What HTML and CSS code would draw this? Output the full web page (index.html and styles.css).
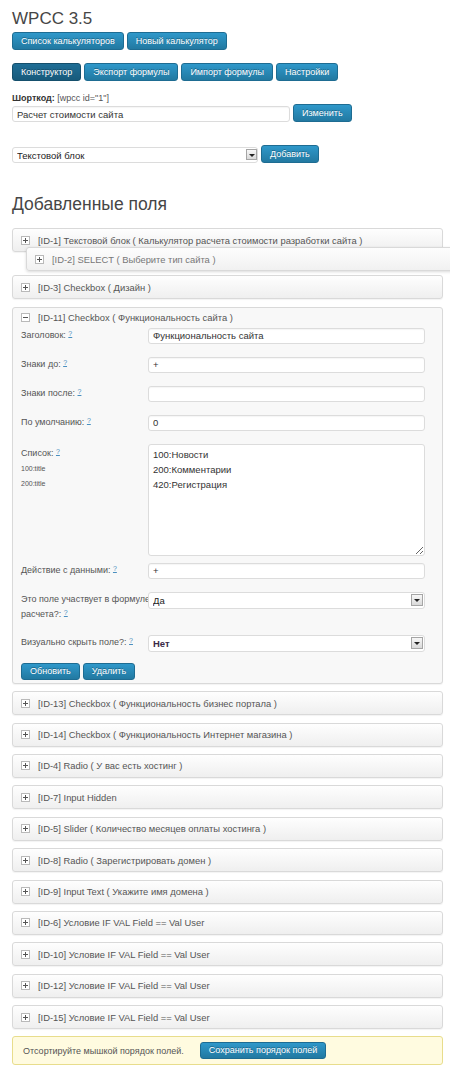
FILE: index.html
```html
<!DOCTYPE html>
<html lang="ru">
<head>
<meta charset="utf-8">
<title>WPCC 3.5</title>
<link rel="stylesheet" href="styles.css">
</head>
<body>
<div class="page">
  <h1 class="title">WPCC 3.5</h1>

  <div class="btn-row row-main">
    <a class="btn">Список калькуляторов</a>
    <a class="btn">Новый калькулятор</a>
  </div>

  <div class="btn-row row-tabs">
    <a class="btn active">Конструктор</a>
    <a class="btn">Экспорт формулы</a>
    <a class="btn">Импорт формулы</a>
    <a class="btn">Настройки</a>
  </div>

  <div class="shortcode"><b>Шорткод:</b> [wpcc id="1"]</div>

  <div class="name-row">
    <input class="text-input name-input" type="text" value="Расчет стоимости сайта">
    <button class="btn" type="button">Изменить</button>
  </div>

  <div class="add-row">
    <div class="select-wrap add-select">
      <select class="select"><option>Текстовой блок</option></select>
      <span class="select-arrow"></span>
    </div>
    <button class="btn" type="button">Добавить</button>
  </div>

  <h2 class="section-title">Добавленные поля</h2>

  <div class="fields">
    <div class="field">
      <div class="field-head"><svg class="toggle" width="9" height="9" viewBox="0 0 9 9"><rect x="0.5" y="0.5" width="8" height="8" fill="#fff" stroke="#b9b9b9"/><path d="M2 4.5h5M4.5 2v5" stroke="#555"/></svg><span>[ID-1] Текстовой блок ( Калькулятор расчета стоимости разработки сайта )</span></div>
    </div>
    <div class="sort-placeholder"></div>
    <div class="field dragging">
      <div class="field-head"><svg class="toggle" width="9" height="9" viewBox="0 0 9 9"><rect x="0.5" y="0.5" width="8" height="8" fill="#fff" stroke="#b9b9b9"/><path d="M2 4.5h5M4.5 2v5" stroke="#555"/></svg><span>[ID-2] SELECT ( Выберите тип сайта )</span></div>
    </div>
    <div class="field">
      <div class="field-head"><svg class="toggle" width="9" height="9" viewBox="0 0 9 9"><rect x="0.5" y="0.5" width="8" height="8" fill="#fff" stroke="#b9b9b9"/><path d="M2 4.5h5M4.5 2v5" stroke="#555"/></svg><span>[ID-3] Checkbox ( Дизайн )</span></div>
    </div>

    <div class="field open">
      <div class="field-head"><svg class="toggle" width="9" height="9" viewBox="0 0 9 9"><rect x="0.5" y="0.5" width="8" height="8" fill="#fff" stroke="#b9b9b9"/><path d="M2 4.5h5" stroke="#555"/></svg><span>[ID-11] Checkbox ( Функциональность сайта )</span></div>
      <div class="field-body">
        <div class="form-row">
          <div class="form-label">Заголовок: <a class="help">?</a></div>
          <input class="text-input" type="text" value="Функциональность сайта">
        </div>
        <div class="form-row">
          <div class="form-label">Знаки до: <a class="help">?</a></div>
          <input class="text-input" type="text" value="+">
        </div>
        <div class="form-row">
          <div class="form-label">Знаки после: <a class="help">?</a></div>
          <input class="text-input" type="text" value="">
        </div>
        <div class="form-row">
          <div class="form-label">По умолчанию: <a class="help">?</a></div>
          <input class="text-input" type="text" value="0">
        </div>
        <div class="form-row row-list">
          <div class="form-label list-label">Список: <a class="help">?</a>
            <div class="hint">100:title</div>
            <div class="hint">200:title</div>
          </div>
          <textarea class="textarea">100:Новости
200:Комментарии
420:Регистрация</textarea>
        </div>
        <div class="form-row">
          <div class="form-label">Действие с данными: <a class="help">?</a></div>
          <input class="text-input" type="text" value="+">
        </div>
        <div class="form-row">
          <div class="form-label nowrap">Это поле участвует в формуле<br>расчета?: <a class="help">?</a></div>
          <div class="select-wrap">
            <select class="select"><option>Да</option></select>
            <span class="select-arrow"></span>
          </div>
        </div>
        <div class="form-row row-last">
          <div class="form-label">Визуально скрыть поле?: <a class="help">?</a></div>
          <div class="select-wrap">
            <select class="select select-strong"><option>Нет</option></select>
            <span class="select-arrow"></span>
          </div>
        </div>
        <div class="form-actions">
          <button class="btn btn-small" type="button">Обновить</button>
          <button class="btn btn-small" type="button">Удалить</button>
        </div>
      </div>
    </div>

    <div class="field">
      <div class="field-head"><svg class="toggle" width="9" height="9" viewBox="0 0 9 9"><rect x="0.5" y="0.5" width="8" height="8" fill="#fff" stroke="#b9b9b9"/><path d="M2 4.5h5M4.5 2v5" stroke="#555"/></svg><span>[ID-13] Checkbox ( Функциональность бизнес портала )</span></div>
    </div>
    <div class="field">
      <div class="field-head"><svg class="toggle" width="9" height="9" viewBox="0 0 9 9"><rect x="0.5" y="0.5" width="8" height="8" fill="#fff" stroke="#b9b9b9"/><path d="M2 4.5h5M4.5 2v5" stroke="#555"/></svg><span>[ID-14] Checkbox ( Функциональность Интернет магазина )</span></div>
    </div>
    <div class="field">
      <div class="field-head"><svg class="toggle" width="9" height="9" viewBox="0 0 9 9"><rect x="0.5" y="0.5" width="8" height="8" fill="#fff" stroke="#b9b9b9"/><path d="M2 4.5h5M4.5 2v5" stroke="#555"/></svg><span>[ID-4] Radio ( У вас есть хостинг )</span></div>
    </div>
    <div class="field">
      <div class="field-head"><svg class="toggle" width="9" height="9" viewBox="0 0 9 9"><rect x="0.5" y="0.5" width="8" height="8" fill="#fff" stroke="#b9b9b9"/><path d="M2 4.5h5M4.5 2v5" stroke="#555"/></svg><span>[ID-7] Input Hidden</span></div>
    </div>
    <div class="field">
      <div class="field-head"><svg class="toggle" width="9" height="9" viewBox="0 0 9 9"><rect x="0.5" y="0.5" width="8" height="8" fill="#fff" stroke="#b9b9b9"/><path d="M2 4.5h5M4.5 2v5" stroke="#555"/></svg><span>[ID-5] Slider ( Количество месяцев оплаты хостинга )</span></div>
    </div>
    <div class="field">
      <div class="field-head"><svg class="toggle" width="9" height="9" viewBox="0 0 9 9"><rect x="0.5" y="0.5" width="8" height="8" fill="#fff" stroke="#b9b9b9"/><path d="M2 4.5h5M4.5 2v5" stroke="#555"/></svg><span>[ID-8] Radio ( Зарегистрировать домен )</span></div>
    </div>
    <div class="field">
      <div class="field-head"><svg class="toggle" width="9" height="9" viewBox="0 0 9 9"><rect x="0.5" y="0.5" width="8" height="8" fill="#fff" stroke="#b9b9b9"/><path d="M2 4.5h5M4.5 2v5" stroke="#555"/></svg><span>[ID-9] Input Text ( Укажите имя домена )</span></div>
    </div>
    <div class="field">
      <div class="field-head"><svg class="toggle" width="9" height="9" viewBox="0 0 9 9"><rect x="0.5" y="0.5" width="8" height="8" fill="#fff" stroke="#b9b9b9"/><path d="M2 4.5h5M4.5 2v5" stroke="#555"/></svg><span>[ID-6] Условие IF VAL Field == Val User</span></div>
    </div>
    <div class="field">
      <div class="field-head"><svg class="toggle" width="9" height="9" viewBox="0 0 9 9"><rect x="0.5" y="0.5" width="8" height="8" fill="#fff" stroke="#b9b9b9"/><path d="M2 4.5h5M4.5 2v5" stroke="#555"/></svg><span>[ID-10] Условие IF VAL Field == Val User</span></div>
    </div>
    <div class="field">
      <div class="field-head"><svg class="toggle" width="9" height="9" viewBox="0 0 9 9"><rect x="0.5" y="0.5" width="8" height="8" fill="#fff" stroke="#b9b9b9"/><path d="M2 4.5h5M4.5 2v5" stroke="#555"/></svg><span>[ID-12] Условие IF VAL Field == Val User</span></div>
    </div>
    <div class="field">
      <div class="field-head"><svg class="toggle" width="9" height="9" viewBox="0 0 9 9"><rect x="0.5" y="0.5" width="8" height="8" fill="#fff" stroke="#b9b9b9"/><path d="M2 4.5h5M4.5 2v5" stroke="#555"/></svg><span>[ID-15] Условие IF VAL Field == Val User</span></div>
    </div>
  </div>

  <div class="notice">
    <span class="notice-text">Отсортируйте мышкой порядок полей.</span>
    <button class="btn btn-small" type="button">Сохранить порядок полей</button>
  </div>
</div>
</body>
</html>
```

FILE: styles.css
```css
* {
  box-sizing: border-box;
}

html,
body {
  margin: 0;
}

body {
  background: #fff;
  color: #333;
  font-family: "Liberation Sans", Arial, sans-serif;
  overflow: hidden;
}

.page {
  padding: 9px 7px 0 12px;
}

.title {
  margin: 0;
  font-size: 17px;
  line-height: 20px;
  font-weight: normal;
  color: #464646;
}

.btn-row {
  display: flex;
  gap: 3px;
}

.row-main {
  margin-top: 3px;
}

.row-tabs {
  margin-top: 13px;
}

.btn {
  display: inline-flex;
  align-items: center;
  justify-content: center;
  height: 18px;
  padding: 0 8px;
  margin: 0;
  font-family: "Liberation Sans", Arial, sans-serif;
  font-size: 9px;
  line-height: 1;
  color: #fff;
  background: linear-gradient(#2f98ca, #2279a1);
  border: 1px solid #1e6c92;
  border-radius: 3px;
  text-shadow: 0 -1px 0 rgba(0, 0, 0, 0.3);
  white-space: nowrap;
  cursor: pointer;
}

.btn.active {
  background: linear-gradient(#1f6e96, #185a7b);
  border-color: #154f6c;
}

.btn-small {
  height: 17px;
}

.shortcode {
  margin-top: 11px;
  font-size: 9px;
  line-height: 12px;
  color: #555;
}

.shortcode b {
  color: #333;
}

.name-row,
.add-row {
  display: flex;
  align-items: flex-end;
  gap: 3px;
}

.add-row {
  margin-top: 23px;
}

.text-input {
  display: block;
  width: 100%;
  height: 16px;
  margin: 0;
  padding: 0 4px;
  font-family: "Liberation Sans", Arial, sans-serif;
  font-size: 9.5px;
  color: #333;
  background: #fff;
  border: 1px solid #dcdcdc;
  border-radius: 3px;
  box-shadow: inset 0 1px 1px rgba(0, 0, 0, 0.04);
  outline: none;
}

.name-input {
  width: 278px;
}

.select-wrap {
  position: relative;
  height: 17px;
}

.add-select {
  width: 246px;
  height: 16px;
}

.select {
  display: block;
  width: 100%;
  height: 100%;
  margin: 0;
  padding: 0 4px;
  font-family: "Liberation Sans", Arial, sans-serif;
  font-size: 9.5px;
  color: #222;
  background: #fff;
  border: 1px solid #dcdcdc;
  border-radius: 3px;
  appearance: none;
  -webkit-appearance: none;
  outline: none;
}

.select-strong {
  font-weight: bold;
  color: #3a2a48;
}

.select-arrow {
  position: absolute;
  top: 2px;
  right: 2px;
  width: 12px;
  height: 12px;
  border: 1px solid #a5a5a5;
  background: linear-gradient(#f7f7f7, #d9d9d9);
  pointer-events: none;
}

.add-select .select-arrow {
  width: 11px;
  height: 11px;
  top: 2px;
  right: 1px;
}

.select-arrow::after {
  content: "";
  position: absolute;
  left: 50%;
  top: 50%;
  margin: -1px 0 0 -3px;
  border-left: 3px solid transparent;
  border-right: 3px solid transparent;
  border-top: 3px solid #222;
}

.section-title {
  margin: 30px 0 13px;
  font-size: 17.5px;
  line-height: 22px;
  font-weight: normal;
  color: #464646;
}

.fields {
  position: relative;
}

.field {
  border: 1px solid #d9d9d9;
  border-radius: 3px;
  background: linear-gradient(#fefefe, #efefef);
  box-shadow: 0 1px 1px rgba(0, 0, 0, 0.05);
  margin-bottom: 7.4px;
}

.field-head {
  display: flex;
  align-items: center;
  gap: 8px;
  height: 22px;
  padding-left: 8px;
  font-size: 9.4px;
  color: #555;
  white-space: nowrap;
}

.toggle {
  flex: none;
  display: block;
}

.sort-placeholder {
  height: 16px;
}

.field.dragging {
  position: absolute;
  top: 19px;
  left: 14px;
  width: 431px;
  z-index: 2;
  background: linear-gradient(#fdfdfd, #f1f1f1);
  box-shadow: 0 1px 3px rgba(0, 0, 0, 0.15);
}

.field.dragging .field-head {
  color: #777;
}

.field.open {
  background: #f8f8f8;
}

.field.open .field-head {
  height: 20px;
}

.field-body {
  padding: 0 17px 3px 8px;
}

.form-row {
  display: grid;
  grid-template-columns: 127px 1fr;
  align-items: start;
  margin-bottom: 13px;
}

.row-list {
  margin-bottom: 7px;
}

.row-last {
  margin-bottom: 11px;
}

.form-label {
  font-size: 9px;
  line-height: 15px;
  color: #555;
}

.nowrap {
  white-space: nowrap;
}

.list-label {
  padding-top: 2px;
}

.hint {
  font-size: 7px;
  line-height: 15px;
  color: #555;
}

.help {
  position: relative;
  top: -2px;
  font-size: 7px;
  color: #4a8fbf;
  text-decoration: underline;
}

.textarea {
  display: block;
  width: 100%;
  height: 112px;
  margin: 0;
  padding: 2px 4px;
  font-family: "Liberation Sans", Arial, sans-serif;
  font-size: 9.5px;
  line-height: 15px;
  color: #333;
  background: #fff;
  border: 1px solid #dcdcdc;
  border-radius: 3px;
  outline: none;
}

.form-actions {
  display: flex;
  gap: 3px;
}

.notice {
  display: flex;
  align-items: center;
  gap: 16px;
  height: 29px;
  padding-left: 10px;
  background: #fffbe0;
  border: 1px solid #e8dd8c;
  border-radius: 3px;
  font-size: 9px;
  color: #555;
}
```
